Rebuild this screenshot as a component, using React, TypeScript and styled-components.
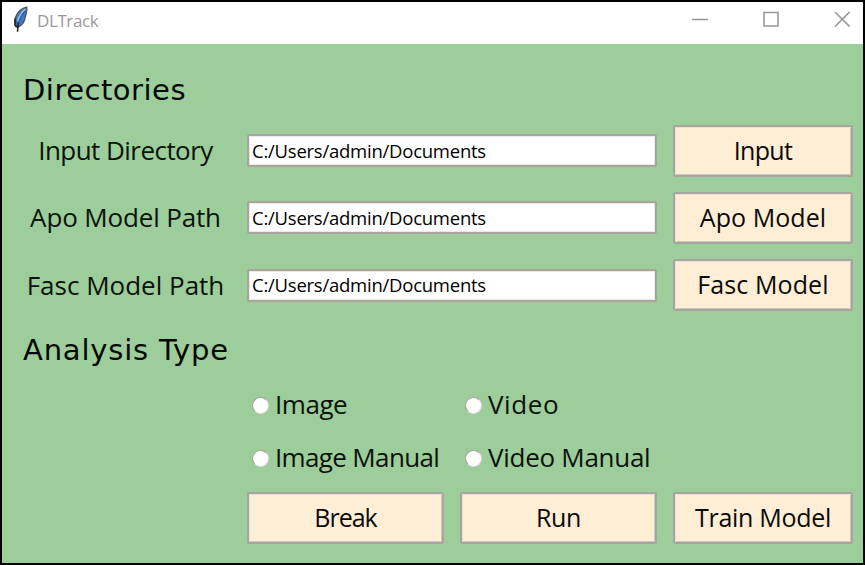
import React from "react";
import styled, { createGlobalStyle } from "styled-components";

const GlobalStyle = createGlobalStyle`
  * { box-sizing: border-box; }
  body { margin: 0; background: #000; overflow: hidden; }
`;

const Window = styled.main`
  width: 865px;
  height: 565px;
  display: flex;
  flex-direction: column;
  border: 2px solid #000;
  background: #9ccd9a;
  color: #0b120b;
  font-family: "Open Sans", sans-serif;
`;

const TitleBar = styled.header`
  height: 42px;
  flex: none;
  display: flex;
  align-items: flex-start;
  background: #fff;
  color: #999;
  padding: 4px 13px 0 10px;
`;

const Title = styled.h1`
  flex: 1;
  margin: 3px 0 0 7px;
  font-size: 17px;
  line-height: 24px;
  font-weight: 400;
  letter-spacing: -0.4px;
`;

const Controls = styled.div`
  display: flex;
  gap: 55px;
  padding-top: 5px;
`;

const Form = styled.div`
  flex: 1;
  display: grid;
  grid-template-columns: 207px 197px 197px 180px;
  grid-template-rows: 73px 67px 67px 68px 60px 52px 54px 65px;
  align-content: start;
  column-gap: 16px;
  padding-left: 22px;
  align-items: center;
`;

const Heading = styled.h2<{ $tracking: number; $offset: number }>`
  grid-column: 1 / -1;
  margin: ${(p) => p.$offset}px 0 0 -1px;
  font: 400 29px/36px "DejaVu Sans", sans-serif;
  letter-spacing: ${(p) => p.$tracking}px;
  color: #050805;
`;

const Label = styled.label<{ $tracking: number }>`
  grid-column: 1;
  text-align: center;
  font-size: 26px;
  line-height: 36px;
  letter-spacing: ${(p) => p.$tracking}px;
  margin: 0 4px 1px 0;
  white-space: nowrap;
`;

const PathField = styled.input`
  grid-column: 2 / 4;
  width: 100%;
  height: 33px;
  border: 2px solid #a9a59c;
  border-radius: 2px;
  background: #fff;
  box-shadow: inset 0 0 0 1px #ebe8e8;
  padding: 0 0 1px 3px;
  font: 400 18.5px/26px "Open Sans", sans-serif;
  letter-spacing: -0.24px;
  color: #000;
  outline: none;
`;

const Button = styled.button<{ $tracking: number }>`
  height: 52px;
  border: 2px solid #a9a59c;
  border-radius: 2px;
  background: #ffeed6;
  box-shadow: inset 1px 1px 0 #e6dfdb, inset -1px -1px 0 #cbc6c4;
  padding: 0 0 2px;
  font: 400 25px/34px "Open Sans", sans-serif;
  letter-spacing: ${(p) => p.$tracking}px;
  color: #0a0a0a;
`;

const Option = styled.label<{ $column: number; $tracking: number }>`
  grid-column: ${(p) => p.$column};
  display: flex;
  align-items: center;
  gap: 6px;
  padding-left: 5px;
  font-size: 26px;
  line-height: 36px;
  letter-spacing: ${(p) => p.$tracking}px;
  white-space: nowrap;

  span { margin-bottom: 2px; }
`;

const Radio = styled.input.attrs({ type: "radio", name: "analysis" })`
  appearance: none;
  width: 17px;
  height: 17px;
  margin: 1px 0 0;
  border: 1px solid #aaa29c;
  border-bottom-color: #ded9d5;
  border-right-color: #ded9d5;
  border-radius: 50%;
  background: #fff;

  &:checked { box-shadow: inset 0 0 0 4px #fff; background: #222; }
`;

function Feather() {
  return (
    <svg width="18" height="27" viewBox="0 0 18 27">
      <path d="M14.8 1.2C10 2 5.5 6 3.2 12c-.8 3-.7 6 .3 8l2.3 1.2c3-1.2 5.6-4 6.8-7.2.7-2.4.7-4 1.6-6.500.5-2 .9-4.500.6-6.300Z" fill="#3f7cc4" stroke="#4b5057" strokeWidth="1.3" />
      <path d="M13.600 3C10.500 5 7.500 9 5.500 15" fill="none" stroke="#9cc1e8" strokeWidth="1.4" />
      <path d="M12.800 5C9.500 10 7.300 15 5.900 20" fill="none" stroke="#2a568f" strokeWidth="1" />
      <path d="M3.300 12.500v7l2 1.500" fill="none" stroke="#252a2e" strokeWidth="1.700" />
      <path d="M6.300 16.500 5.500 25.800" fill="none" stroke="#222" strokeWidth="1.500" />
    </svg>
  );
}

function ControlIcon({ d }: { d: string }) {
  return (
    <svg width="16" height="16" viewBox="0 0 16 16" fill="none" stroke="#999" strokeWidth="1.6">
      <path d={d} />
    </svg>
  );
}

const paths = [
  { label: "Input Directory", tracking: -0.55, button: "Input", buttonTracking: -0.7 },
  { label: "Apo Model Path", tracking: -0.15, button: "Apo Model", buttonTracking: 0.05 },
  { label: "Fasc Model Path", tracking: 0, button: "Fasc Model", buttonTracking: 0.1 },
];

const options = [
  { label: "Image", column: 2, tracking: -0.45 },
  { label: "Video", column: 3, tracking: 0.6 },
  { label: "Image Manual", column: 2, tracking: -0.65 },
  { label: "Video Manual", column: 3, tracking: -0.28 },
];

const ActionButton = styled(Button)<{ $column: number }>`
  grid-column: ${(p) => p.$column};
`;

export default function App() {
  return (
    <Window>
      <GlobalStyle />
      <TitleBar>
        <Feather />
        <Title>DLTrack</Title>
        <Controls>
          <ControlIcon d="M0 8.500H16" />
          <ControlIcon d="M1 1.500H15V15H1Z" />
          <ControlIcon d="M1 1 15.500 15.500M15.500 1 1 15.500" />
        </Controls>
      </TitleBar>
      <Form>
        <Heading $tracking={0.5} $offset={18}>Directories</Heading>
        {paths.map((p) => (
          <React.Fragment key={p.label}>
            <Label $tracking={p.tracking}>{p.label}</Label>
            <PathField defaultValue="C:/Users/admin/Documents" spellCheck={false} />
            <Button $tracking={p.buttonTracking}>{p.button}</Button>
          </React.Fragment>
        ))}
        <Heading $tracking={0.82} $offset={1}>Analysis Type</Heading>
        {options.map((o) => (
          <Option key={o.label} $column={o.column} $tracking={o.tracking}>
            <Radio />
            <span>{o.label}</span>
          </Option>
        ))}
        <ActionButton $column={2} $tracking={-1}>Break</ActionButton>
        <ActionButton $column={3} $tracking={-0.4}>Run</ActionButton>
        <ActionButton $column={4} $tracking={-0.29}>Train Model</ActionButton>
      </Form>
    </Window>
  );
}
